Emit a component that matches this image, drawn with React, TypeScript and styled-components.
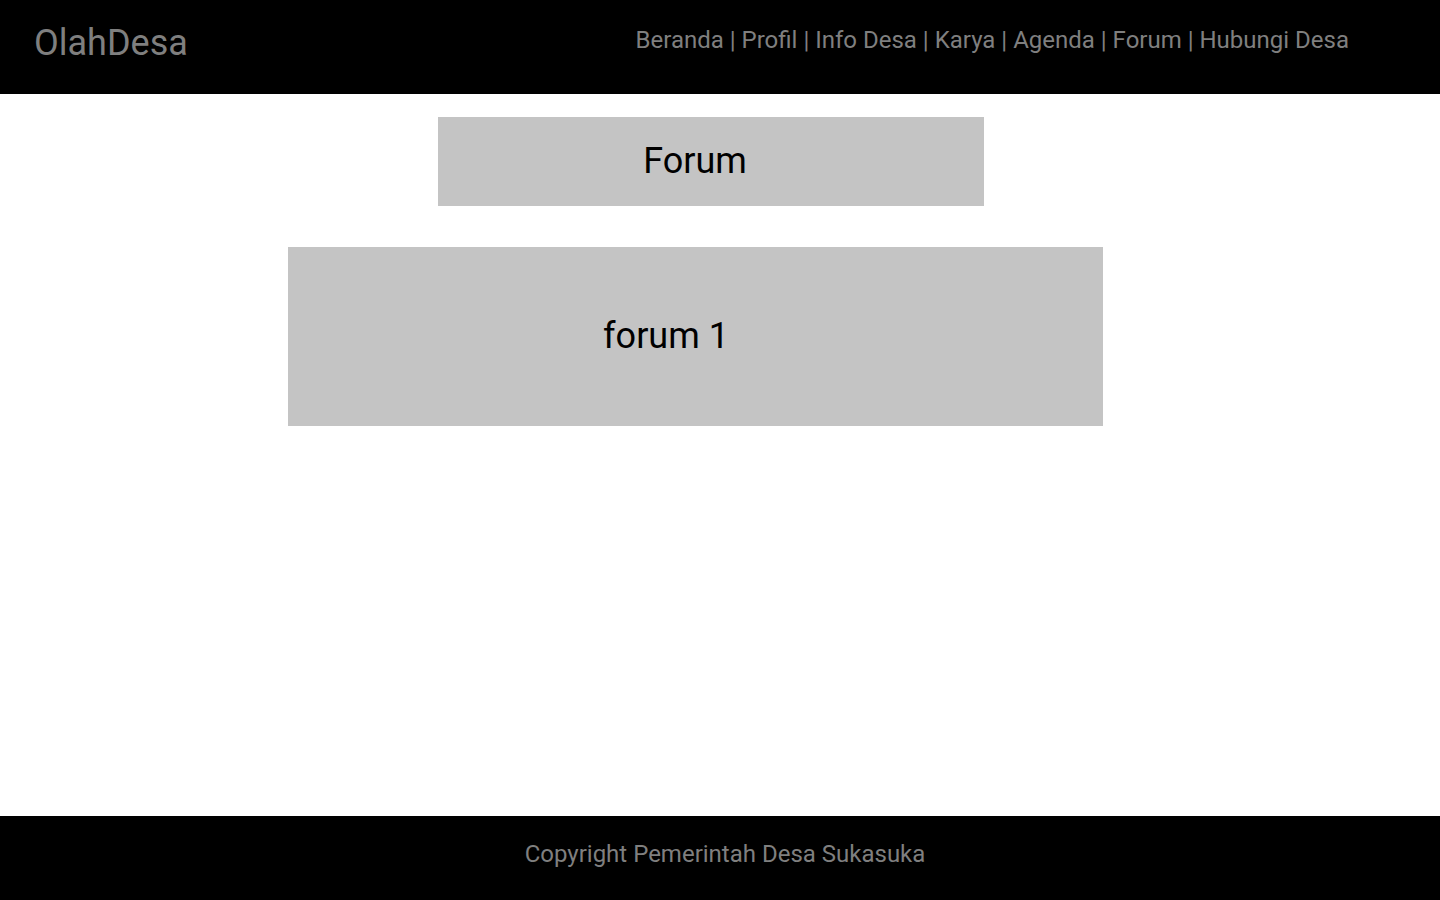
import React from 'react';
import styled, { createGlobalStyle } from 'styled-components';

const GlobalStyle = createGlobalStyle`
  * { box-sizing: border-box; }
  body { margin: 0; background: #fff; color: #000; font-family: Roboto, sans-serif; }
`;

const Page = styled.div`
  min-height: 100vh;
  display: flex;
  flex-direction: column;
`;

const Header = styled.header`
  display: flex;
  justify-content: space-between;
  align-items: flex-start;
  padding: 22px 91px 30px 34px;
  background: #000;
  color: #7f7f7f;
`;

const Brand = styled.a`
  font-size: 36px;
  line-height: 42px;
  color: inherit;
  text-decoration: none;
`;

const Nav = styled.nav`
  padding-top: 4px;
  font-size: 24px;
  line-height: 28px;
`;

const NavLink = styled.a`
  color: inherit;
  text-decoration: none;
`;

const Main = styled.main`
  flex: 1;
  display: flex;
  flex-direction: column;
  align-items: center;
  gap: 41px;
  padding: 23px 49px 40px 0;
`;

const Title = styled.h1`
  width: 546px;
  max-width: 100%;
  margin: 0 0 0 31px;
  padding: 23px 32px 24px 0;
  background: #c4c4c4;
  font-size: 36px;
  line-height: 42px;
  font-weight: 400;
  text-align: center;
`;

const Topic = styled.article`
  width: 815px;
  max-width: 100%;
  padding: 68px 59px 69px 0;
  background: #c4c4c4;
  font-size: 36px;
  line-height: 42px;
  text-align: center;
`;

const Footer = styled.footer`
  padding: 24px 0 32px 10px;
  background: #000;
  color: #7f7f7f;
  font-size: 24px;
  line-height: 28px;
  text-align: center;
`;

const links = ['Beranda', 'Profil', 'Info Desa', 'Karya', 'Agenda', 'Forum', 'Hubungi Desa'];

export default function App() {
  return (
    <Page>
      <GlobalStyle />
      <Header>
        <Brand href="#">OlahDesa</Brand>
        <Nav>
          {links.map((label, i) => (
            <React.Fragment key={label}>
              {i > 0 && ' | '}
              <NavLink href="#">{label}</NavLink>
            </React.Fragment>
          ))}
        </Nav>
      </Header>
      <Main>
        <Title>Forum</Title>
        <Topic>forum 1</Topic>
      </Main>
      <Footer>Copyright Pemerintah Desa Sukasuka</Footer>
    </Page>
  );
}
